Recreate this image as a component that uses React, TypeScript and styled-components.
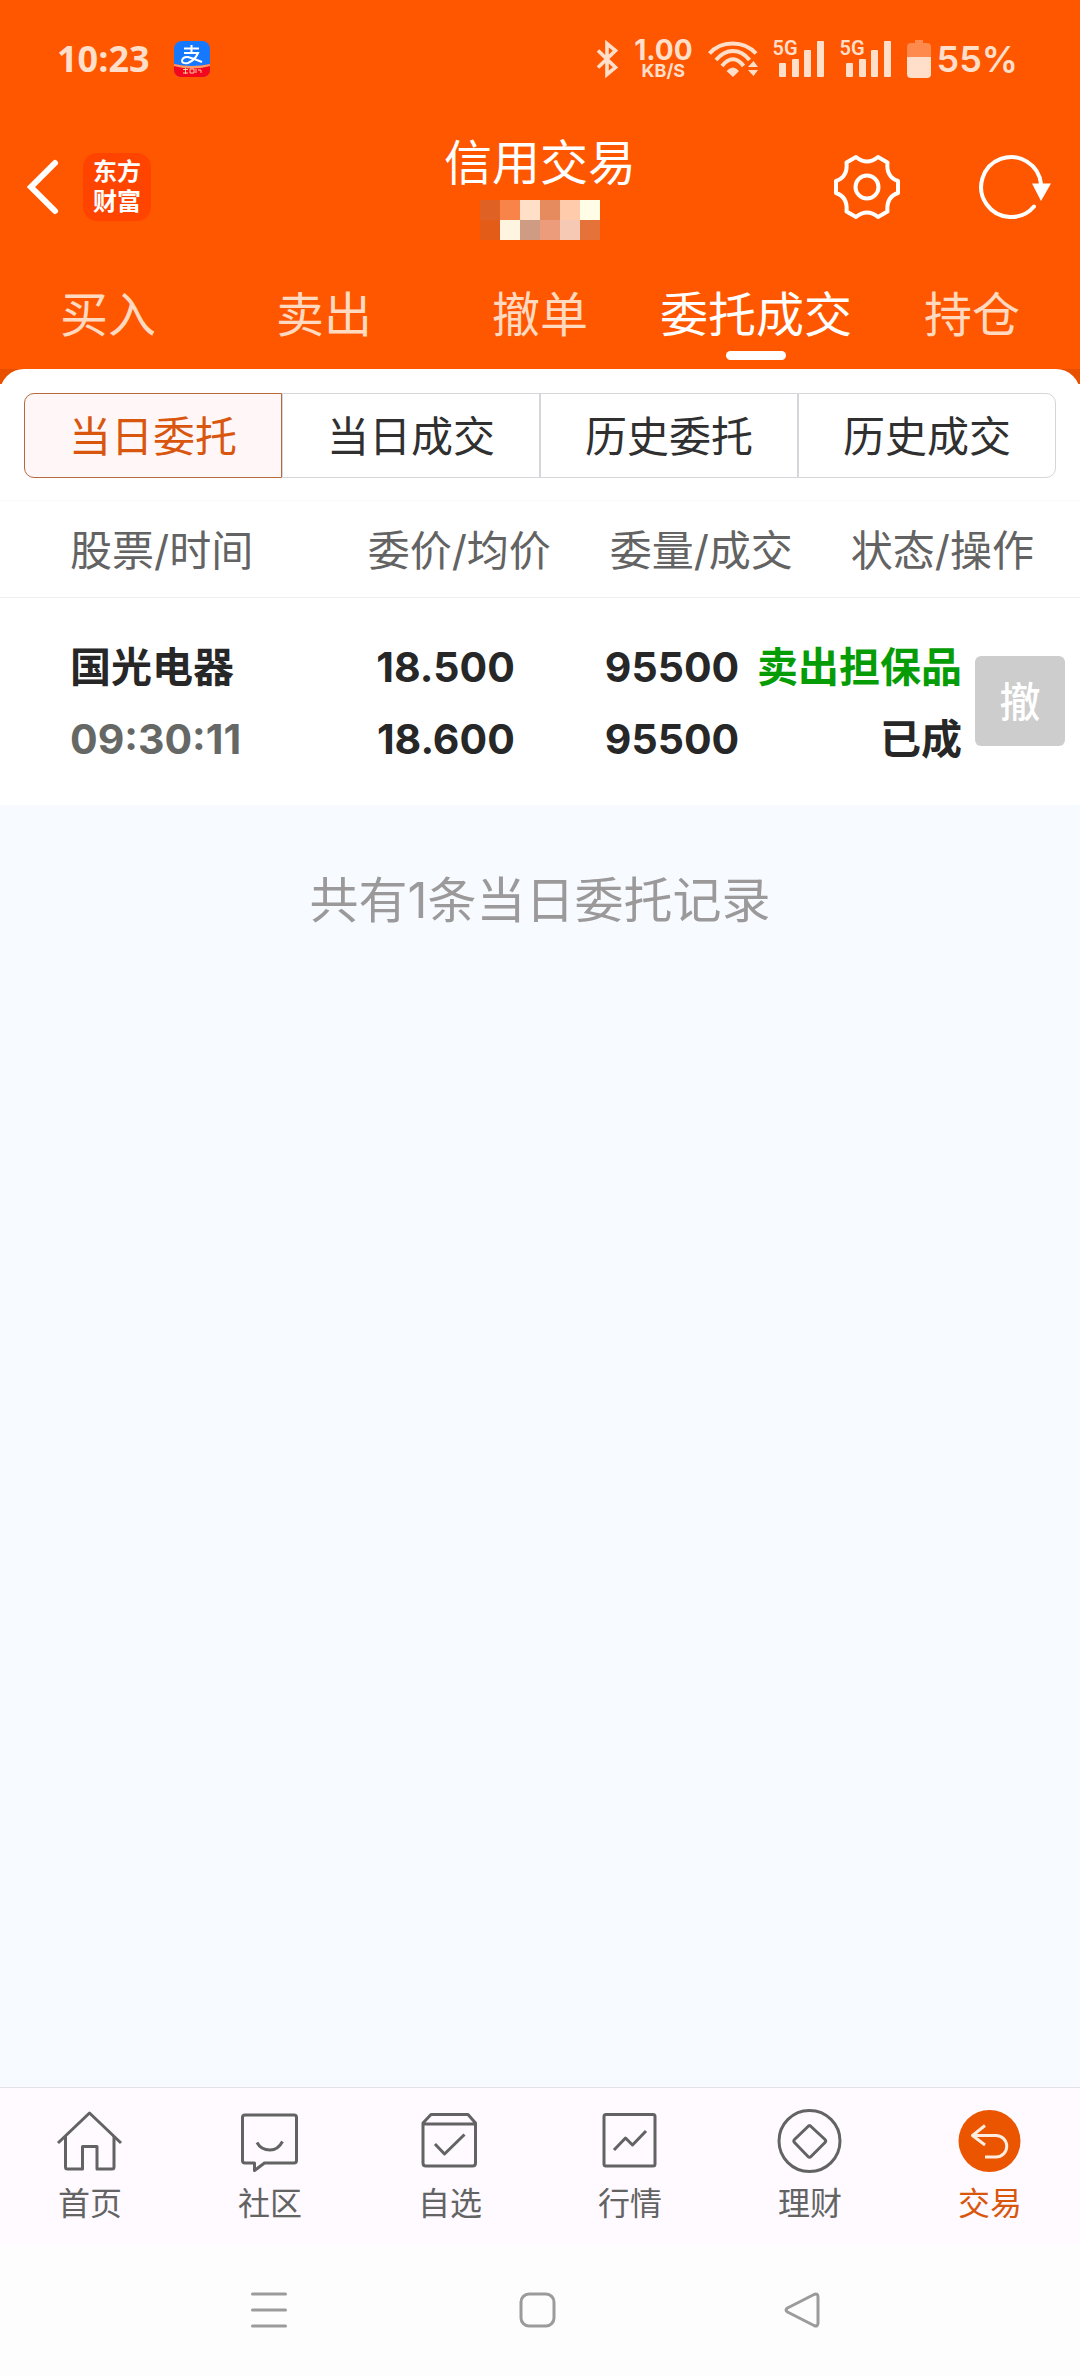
import React, { useState } from "react";
import styled, { createGlobalStyle } from "styled-components";

const mosaic = [
  "#df6224", "#f98449", "#ffdfc8", "#e58b5e", "#ffcbab", "#fffde6",
  "#e35c18", "#fff4df", "#cd9c82", "#ec9c7a", "#f6c9b5", "#e57238",
];

const mainTabs = ["买入", "卖出", "撤单", "委托成交", "持仓"];
const subTabs = ["当日委托", "当日成交", "历史委托", "历史成交"];

function WifiIcon() {
  return (
    <svg width="50" height="36" viewBox="0 0 50 36" fill="none" stroke="currentColor" strokeWidth="4">
      <path d="M1.500 12.500C13-1 36-1 48 12.500" />
      <path d="M8 19C18 7 32 7 41.500 19" />
      <path d="M14 25C21 16 29 16 35.500 25" />
      <path d="M18.500 30Q25 23 31 30L25 36Z" fill="currentColor" stroke="none" />
      <path d="M40 26L45.500 20L50 26ZM40 29H50L45.500 35Z" fill="currentColor" stroke="none" />
    </svg>
  );
}

function SignalIcon() {
  return (
    <Signal>
      <span>5G</span>
      <svg width="46" height="36" viewBox="0 0 46 36" fill="currentColor">
        <rect x="0" y="22" width="7" height="14" rx="1" />
        <rect x="13" y="18" width="7" height="18" rx="1" />
        <rect x="25" y="9" width="7" height="27" rx="1" />
        <rect x="38" y="0" width="7" height="36" rx="1" />
      </svg>
    </Signal>
  );
}

const navItems = [
  {
    label: "首页",
    icon: (
      <>
        <path d="M2 35L33.500 5L65 35" />
        <path d="M9.500 28V59Q9.500 61 11.500 61H26.500V38.500H41V61H56Q58 61 58 59V28" />
      </>
    ),
  },
  {
    label: "社区",
    icon: (
      <>
        <path d="M9 7H58Q60.500 7 60.500 9.500V52.500Q60.500 55 58 55H28.500L18.500 62.500V55H9Q6.500 55 6.500 52.500V9.500Q6.500 7 9 7Z" />
        <path d="M21 34.500Q25 42 34 42Q42 42 46.500 33.500" />
      </>
    ),
  },
  {
    label: "自选",
    icon: (
      <>
        <path d="M7 15L15 6.500H52L59.500 15V55Q59.500 58 56.500 58H10Q7 58 7 55ZM7 16H59" />
        <path d="M19 36L28.500 46L48.500 26.500" />
      </>
    ),
  },
  {
    label: "行情",
    icon: (
      <>
        <rect x="8" y="6.500" width="51" height="51.500" rx="2" />
        <path d="M18 42L29.500 30L36.500 37L50 23" />
      </>
    ),
  },
  {
    label: "理财",
    icon: (
      <>
        <circle cx="33.500" cy="33" r="30.500" />
        <path d="M32 18.500Q33.500 16.500 35 18.500L49 31.500Q50.500 33 49 34.500L35 48.500Q33.500 50 32 48.500L18.500 34.500Q17 33 18.500 31.500Z" />
      </>
    ),
  },
  {
    label: "交易",
    icon: (
      <>
        <circle cx="33.500" cy="33" r="31" fill="#eb5500" stroke="none" />
        <path d="M29 17.500L16.500 27.500L29 37M17 27.500H40A10.700 10.700 0 0 1 40 49H29" stroke="#ffece0" strokeWidth="3" />
      </>
    ),
  },
];

function App() {
  const [tab, setTab] = useState(3);
  const [sub, setSub] = useState(0);
  const [nav, setNav] = useState(5);

  return (
    <Page>
      <GlobalStyle />
      <Header>
        <StatusBar>
          <Clock>10:23</Clock>
          <svg width="36" height="36" viewBox="0 0 36 36" fill="none">
            <rect width="36" height="36" rx="8" fill="#1677ff" />
            <path d="M0 23Q18 28 36 23V28Q36 36 28 36H8Q0 36 0 28Z" fill="#f5061f" />
            <path d="M0 23Q18 27 36 23V25Q18 30 0 25Z" fill="#ff9a62" />
            <path d="M10 7.500H25M17.500 4V12M10 12H24Q21 19 14 22Q8 23 8 19.500Q9 15.500 14 16Q21 18 28 21" stroke="#fff" strokeWidth="2" />
            <path d="M9 28.500H14M9 32H14M11.500 27V33M16 28H20V32H16ZM22 28V32M24 29H27V32" stroke="#ffc9a0" strokeWidth="1" />
          </svg>
          <StatusRight>
            <svg width="22" height="36" viewBox="0 0 22 36" fill="none" stroke="currentColor" strokeWidth="3.600">
              <path d="M1 9.500L18.500 26.500L10 33.500V2.500L18.500 9.500L1 26.500" />
            </svg>
            <Speed>
              <b>1.00</b>
              <small>KB/S</small>
            </Speed>
            <WifiIcon />
            <SignalIcon />
            <SignalIcon />
            <Battery>
              <svg width="24" height="38" viewBox="0 0 24 38">
                <path d="M8 0H16V3H20Q24 3 24 7V17H0V7Q0 3 4 3H8Z" fill="#ff8a4d" />
                <path d="M0 17H24V34Q24 38 20 38H4Q0 38 0 34Z" fill="currentColor" />
              </svg>
              <span>55%</span>
            </Battery>
          </StatusRight>
        </StatusBar>

        <TitleBar>
          <TitleSide>
            <IconButton aria-label="返回">
              <svg width="32" height="56" viewBox="0 0 32 56" fill="none" stroke="#fff" strokeWidth="6" strokeLinecap="round">
                <path d="M27 4L3 28L27 52" />
              </svg>
            </IconButton>
            <Logo>
              <span>东方</span>
              <span>财富</span>
            </Logo>
          </TitleSide>
          <TitleCenter>
            <h1>信用交易</h1>
            <Mosaic>
              {mosaic.map((color, i) => (
                <Tile key={i} $color={color} />
              ))}
            </Mosaic>
          </TitleCenter>
          <TitleSide $end>
            <IconButton aria-label="设置">
              <svg width="68" height="68" viewBox="0 0 68 68" fill="none" stroke="#fff" strokeWidth="4" strokeLinejoin="round">
                <path d="M23 4Q34 13 45 4L54.500 9.500Q53 24 65 28V40Q53 44 54.500 58.500L45 64Q34 55 23 64L13.500 58.500Q15 44 3 40V28Q15 24 13.500 9.500Z" />
                <circle cx="34" cy="34" r="11.500" />
              </svg>
            </IconButton>
            <IconButton aria-label="刷新">
              <svg width="72" height="68" viewBox="0 0 72 68" fill="none" stroke="#fff" strokeWidth="4" strokeLinecap="round">
                <path d="M61 31A30 30 0 1 0 54 53.500" />
                <path d="M52 30.500H71L61 48Z" fill="#fff" stroke="none" />
              </svg>
            </IconButton>
          </TitleSide>
        </TitleBar>

        <MainTabs>
          {mainTabs.map((name, i) => (
            <MainTab key={name} $active={i === tab} onClick={() => setTab(i)}>
              {name}
            </MainTab>
          ))}
        </MainTabs>
      </Header>

      <Panel>
        <Segment>
          {subTabs.map((name, i) => (
            <SegmentButton key={name} $active={i === sub} onClick={() => setSub(i)}>
              {name}
            </SegmentButton>
          ))}
        </Segment>

        <Orders>
          <colgroup>
            <col width="26%" />
            <col width="25%" />
            <col width="18%" />
            <col width="21%" />
            <col width="10%" />
          </colgroup>
          <thead>
            <tr>
              <HeadCell $align="left">股票/时间</HeadCell>
              <HeadCell>委价/均价</HeadCell>
              <HeadCell colSpan={3}>
                <HeadPair>
                  <span>委量/成交</span>
                  <span>状态/操作</span>
                </HeadPair>
              </HeadCell>
            </tr>
          </thead>
          <tbody>
            <tr>
              <Cell $align="left">
                国光电器
                <Second $muted>09:30:11</Second>
              </Cell>
              <Cell $inset={36}>
                18.500
                <Second>18.600</Second>
              </Cell>
              <Cell $inset={6}>
                95500
                <Second>95500</Second>
              </Cell>
              <Cell $inset={10}>
                <Side>卖出担保品</Side>
                <Second>已成</Second>
              </Cell>
              <Cell $inset={15}>
                <CancelButton>撤</CancelButton>
              </Cell>
            </tr>
          </tbody>
        </Orders>
      </Panel>

      <Summary>共有1条当日委托记录</Summary>

      <BottomNav>
        {navItems.map((item, i) => (
          <NavItem key={item.label} href="#" $active={i === nav} onClick={() => setNav(i)}>
            <svg width="68" height="64" viewBox="0 0 68 64" fill="none" stroke="currentColor" strokeWidth="3" strokeLinejoin="round">
              {item.icon}
            </svg>
            {item.label}
          </NavItem>
        ))}
      </BottomNav>

      <SystemBar>
        <IconButton aria-label="菜单">
          <svg width="38" height="38" viewBox="0 0 38 38" fill="none" stroke="#9b9b9b" strokeWidth="3" strokeLinecap="round">
            <path d="M2.500 3H35.500M2.500 19H35.500M2.500 35H35.500" />
          </svg>
        </IconButton>
        <IconButton aria-label="主屏幕">
          <svg width="38" height="38" viewBox="0 0 38 38" fill="none" stroke="#9b9b9b" strokeWidth="3">
            <rect x="3" y="3" width="33" height="32" rx="8" />
          </svg>
        </IconButton>
        <IconButton aria-label="后退">
          <svg width="38" height="38" viewBox="0 0 38 38" fill="none" stroke="#9b9b9b" strokeWidth="3" strokeLinejoin="round">
            <path d="M1.500 17Q-1.500 19 1.500 21L28 34.500Q32 36 32 32V6Q32 2 28 3.500Z" />
          </svg>
        </IconButton>
      </SystemBar>
    </Page>
  );
}

export default App;

const GlobalStyle = createGlobalStyle`
  * {
    box-sizing: border-box;
  }

  body {
    margin: 0;
    background: #f7faff;
    font-family: Inter, "Noto Sans CJK SC", sans-serif;
  }

  button {
    font-family: inherit;
    border: none;
    padding: 0;
    background: none;
    cursor: pointer;
  }

  svg {
    display: block;
    flex-shrink: 0;
    overflow: visible;
  }
`;

const Page = styled.div`
  min-height: 100vh;
  display: flex;
  flex-direction: column;
`;

const Header = styled.header`
  background: #ff5700;
  color: #fff;
`;

const StatusBar = styled.div`
  display: flex;
  align-items: center;
  gap: 24px;
  height: 118px;
  padding: 0 62px 0 57px;
  color: #ffdfca;
  font-weight: 600;
`;

const Clock = styled.span`
  font-family: "Open Sans", sans-serif;
  font-size: 36px;
  font-weight: 700;
  line-height: 36px;
`;

const StatusRight = styled.div`
  display: flex;
  align-items: center;
  gap: 15px;
  margin-left: auto;
`;

const Speed = styled.div`
  display: flex;
  flex-direction: column;
  align-items: center;

  b {
    font-size: 28px;
    font-weight: 700;
    line-height: 24px;
  }

  small {
    font-size: 18px;
    font-weight: 700;
    line-height: 18px;
  }
`;

const Signal = styled.div`
  position: relative;
  padding-left: 6px;

  span {
    position: absolute;
    top: -3px;
    left: 0;
    font-family: Roboto, sans-serif;
    font-size: 20px;
    line-height: 20px;
  }
`;

const Battery = styled.div`
  display: flex;
  align-items: center;
  gap: 6px;
  font-size: 36px;
`;

const TitleBar = styled.div`
  display: grid;
  grid-template-columns: 1fr auto 1fr;
  align-items: center;
  height: 138px;
  padding: 0 28px;
`;

const TitleSide = styled.div<{ $end?: boolean }>`
  display: flex;
  align-items: center;
  gap: ${({ $end }) => ($end ? "79px" : "23px")};
  justify-content: ${({ $end }) => ($end ? "flex-end" : "flex-start")};
`;

const IconButton = styled.button`
  display: flex;
`;

const Logo = styled.div`
  display: flex;
  flex-direction: column;
  justify-content: center;
  align-items: center;
  width: 68px;
  height: 68px;
  border-radius: 14px;
  background: #ff4400;
  font-size: 24px;
  font-weight: 700;
  line-height: 30px;
`;

const TitleCenter = styled.div`
  display: flex;
  flex-direction: column;
  align-items: center;
  gap: 2px;
  padding-bottom: 6px;

  h1 {
    margin: 0;
    font-size: 48px;
    font-weight: 400;
    line-height: 70px;
  }
`;

const Mosaic = styled.div`
  display: grid;
  grid-template-columns: repeat(6, 20px);
`;

const Tile = styled.i<{ $color: string }>`
  height: 20px;
  background: ${({ $color }) => $color};
`;

const MainTabs = styled.nav`
  display: grid;
  grid-template-columns: repeat(5, 1fr);
  height: 113px;
`;

const MainTab = styled.button<{ $active: boolean }>`
  position: relative;
  padding-bottom: 4px;
  font-size: 48px;
  color: ${({ $active }) => ($active ? "#fff" : "#ffd9c0")};
  white-space: nowrap;

  &::after {
    content: "";
    display: ${({ $active }) => ($active ? "block" : "none")};
    position: absolute;
    bottom: 9px;
    left: 50%;
    width: 60px;
    height: 9px;
    margin-left: -30px;
    border-radius: 5px;
    background: #fff;
  }
`;

const Panel = styled.main`
  background: linear-gradient(#e85000 15px, #fff 15px);

  &::before {
    content: "";
    display: block;
    height: 24px;
    border-radius: 24px 24px 0 0;
    background: #fff;
  }
`;

const Segment = styled.div`
  display: grid;
  grid-template-columns: repeat(4, 1fr);
  padding: 0 24px 22px;
`;

const SegmentButton = styled.button<{ $active: boolean }>`
  height: 85px;
  padding-bottom: 4px;
  border: 1px solid ${({ $active }) => ($active ? "#b5693c" : "#d5d5da")};
  background: ${({ $active }) => ($active ? "#fff7f7" : "#fff")};
  color: ${({ $active }) => ($active ? "#d9560f" : "#303030")};
  font-size: 42px;

  &:first-child {
    border-radius: 10px 0 0 10px;
  }

  &:last-child {
    border-radius: 0 10px 10px 0;
  }
`;

const Orders = styled.table`
  width: 100%;
  border-collapse: collapse;
  table-layout: fixed;
  border-top: 1px solid #fafafa;
`;

const HeadCell = styled.th<{ $align?: string }>`
  height: 97px;
  padding: 0 0 4px ${({ $align }) => ($align ? "70px" : "0")};
  border-bottom: 1px solid #eee;
  color: #636363;
  font-size: 42px;
  font-weight: 400;
  text-align: ${({ $align }) => $align || "right"};
  white-space: nowrap;
`;

const HeadPair = styled.div`
  display: flex;
  justify-content: flex-end;
  gap: 58px;
  padding-right: 46px;
`;

const Cell = styled.td<{ $align?: string; $inset?: number }>`
  height: 207px;
  padding: 4px ${({ $inset = 0 }) => $inset}px 0 ${({ $align }) => ($align ? "70px" : "0")};
  color: #272727;
  font-size: 41px;
  font-weight: 700;
  line-height: 72px;
  text-align: ${({ $align }) => $align || "right"};
  white-space: nowrap;

  &:last-child {
    padding-top: 0;
  }
`;

const Second = styled.div<{ $muted?: boolean }>`
  color: ${({ $muted }) => ($muted ? "#666866" : "inherit")};
`;

const Side = styled.div`
  color: #069c06;
`;

const CancelButton = styled.button`
  width: 90px;
  height: 90px;
  padding-bottom: 4px;
  border-radius: 6px;
  background: #cdcdcd;
  color: #fff;
  font-size: 41px;
  font-weight: 500;
  vertical-align: middle;
`;

const Summary = styled.p`
  flex: 1;
  margin: 0;
  padding-top: 60px;
  color: #9b9999;
  font-size: 49px;
  line-height: 72px;
  text-align: center;
`;

const BottomNav = styled.nav`
  display: grid;
  grid-template-columns: repeat(6, 1fr);
  height: 157px;
  border-top: 1px solid #e2e2e6;
  background: #fefaff;
`;

const NavItem = styled.a<{ $active: boolean }>`
  display: flex;
  flex-direction: column;
  align-items: center;
  gap: 8px;
  padding-top: 20px;
  color: ${({ $active }) => ($active ? "#d9560f" : "#636363")};
  font-size: 32px;
  line-height: 48px;
  text-decoration: none;
`;

const SystemBar = styled.footer`
  display: flex;
  justify-content: center;
  align-items: center;
  gap: 230px;
  height: 132px;
  padding-right: 6px;
  background: #fdfdfd;
`;
